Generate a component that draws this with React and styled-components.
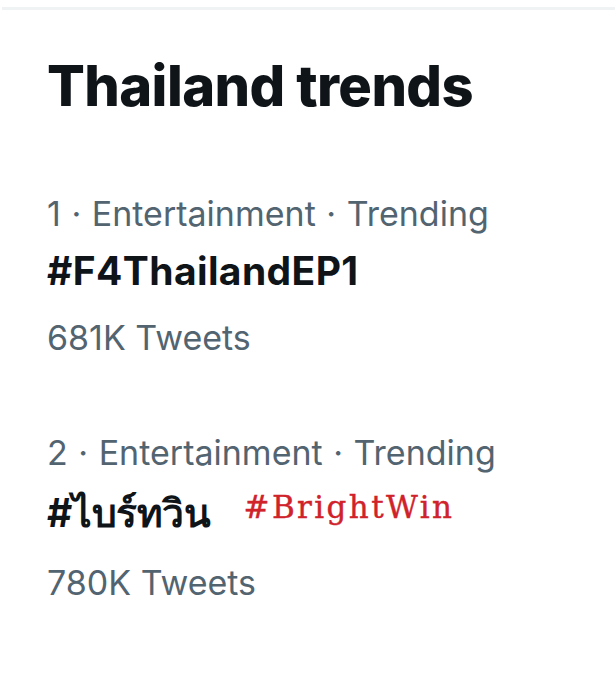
import React from "react";
import styled, { createGlobalStyle } from "styled-components";

const GlobalStyle = createGlobalStyle`
    html, body {
        margin: 0;
        padding: 0;
        background: #ffffff;
    }
    body {
        font-family: Inter, "Noto Sans", "Liberation Sans", sans-serif;
        color: #0f1419;
    }
`;

const Panel = styled.div`
    width: 613px;
    height: 673px;
    margin: 7px 0 0 2px;
    border-top: 3px solid #eff3f4;
    padding: 40px 0 0 45px;
    box-sizing: border-box;
`;

const Title = styled.h2`
    margin: 0 0 70px;
    font-size: 56px;
    line-height: 72px;
    font-weight: 800;
    letter-spacing: -0.6px;
    color: #0f1419;
`;

const List = styled.div`
    display: flex;
    flex-direction: column;
    gap: 60px;
`;

const Trend = styled.div`
    display: flex;
    flex-direction: column;
`;

const Meta = styled.div`
    font-size: 34px;
    line-height: 44px;
    word-spacing: 1px;
    color: #536471;
`;

const Tag = styled.div`
    display: flex;
    align-items: baseline;
    gap: 33px;
    margin-top: 4px;
    font-size: 39px;
    line-height: 62px;
    font-weight: 700;
    letter-spacing: 0.4px;
    color: #0f1419;
`;

const ThaiTag = styled.span`
    letter-spacing: -0.4px;
    padding-top: 3px;
`;

// red caption laid over the screenshot, sits a little above the baseline
const Overlay = styled.span`
    position: relative;
    top: -9px;
    font-family: "DejaVu Serif", "Liberation Serif", serif;
    font-weight: 400;
    font-size: 31px;
    letter-spacing: 2.4px;
    -webkit-text-stroke: 0.4px #d0222a;
    color: #d0222a;
`;

const Count = styled.div`
    margin-top: 3px;
    font-size: 34px;
    line-height: 66px;
    color: #536471;
`;

const trends = [
    { rank: 1, tag: "#F4ThailandEP1", count: "681K Tweets" },
    { rank: 2, tag: "#ไบร์ทวิน", note: "#BrightWin", count: "780K Tweets" },
];

const App = () => {
    return (
        <>
            <GlobalStyle />
            <Panel>
                <Title>Thailand trends</Title>
                <List>
                    {trends.map((t) => (
                        <Trend key={t.rank}>
                            <Meta>{t.rank} · Entertainment · Trending</Meta>
                            <Tag>
                                {t.note ? <ThaiTag>{t.tag}</ThaiTag> : t.tag}
                                {t.note && <Overlay>{t.note}</Overlay>}
                            </Tag>
                            <Count>{t.count}</Count>
                        </Trend>
                    ))}
                </List>
            </Panel>
        </>
    );
};

export default App;
